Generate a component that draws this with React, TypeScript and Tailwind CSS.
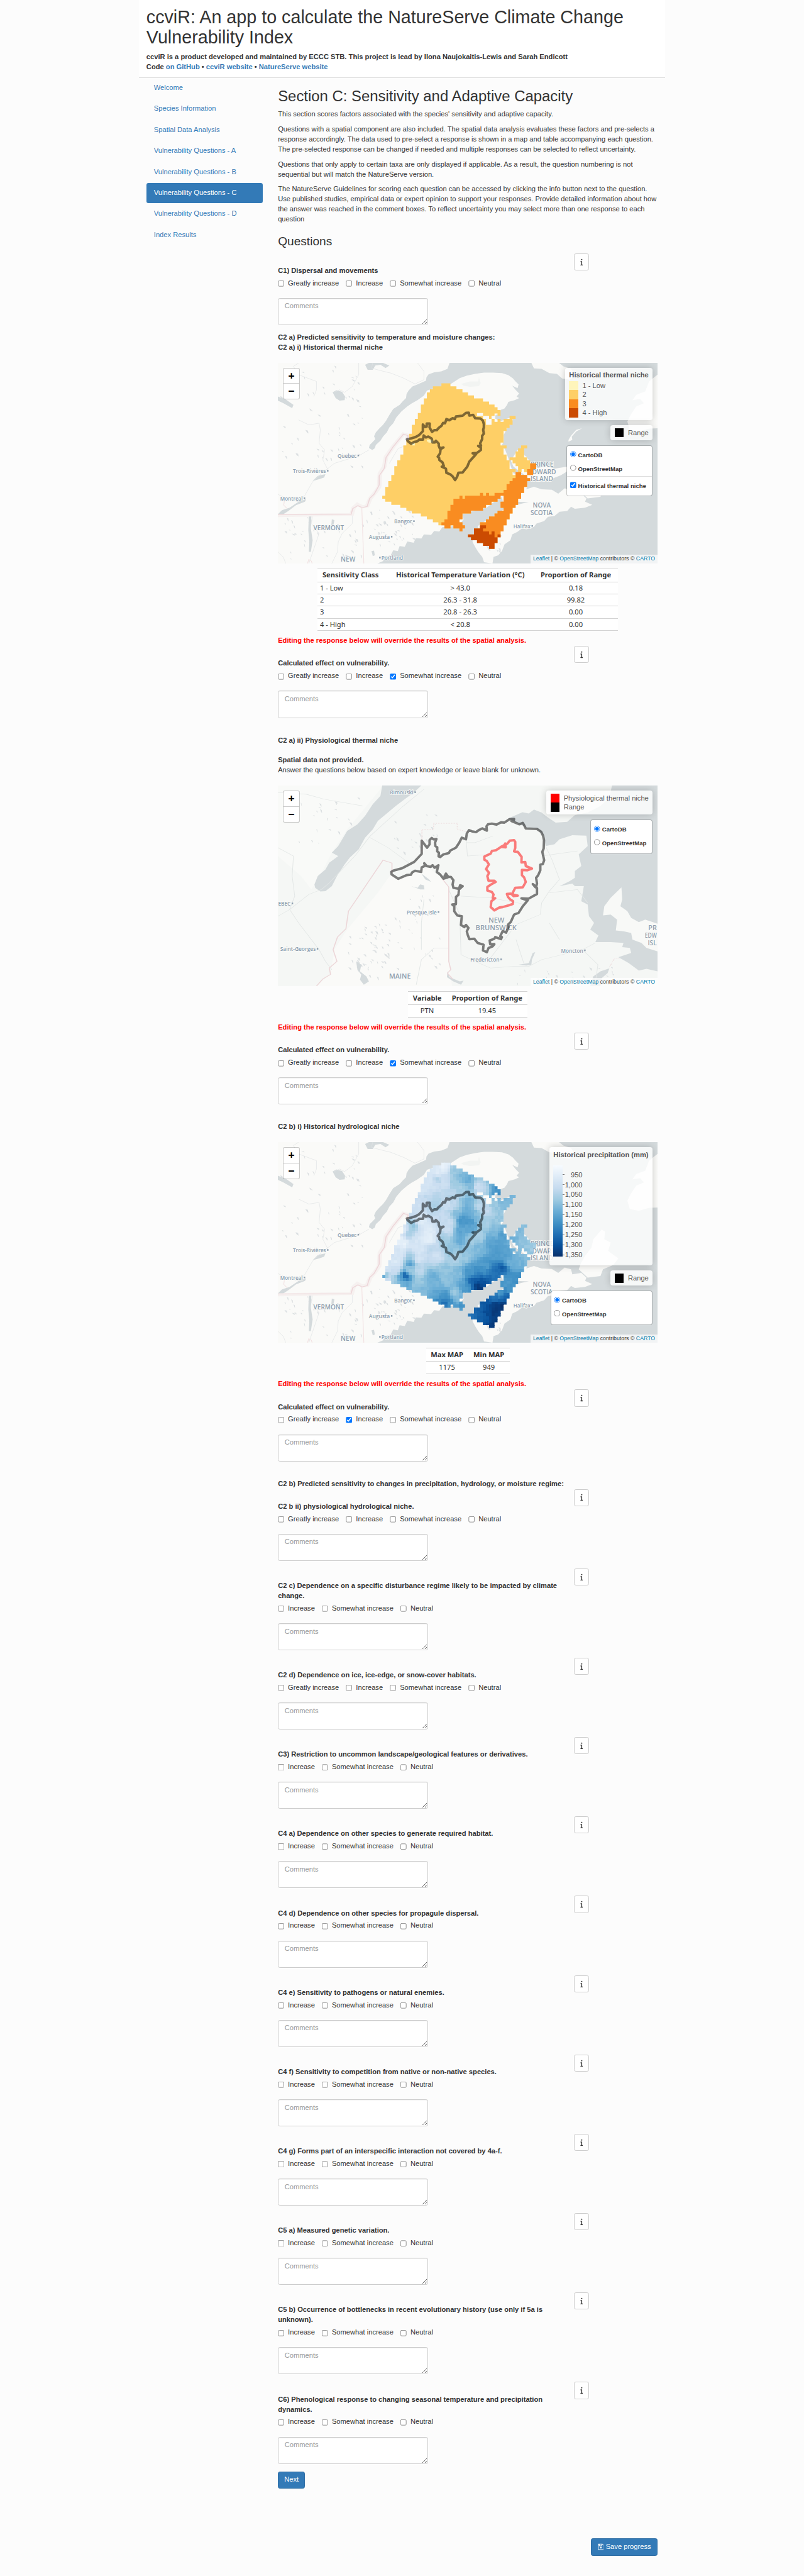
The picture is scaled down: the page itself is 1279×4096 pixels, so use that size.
import React from "react";
import { FaInfo, FaRegFloppyDisk } from "react-icons/fa6";

/* ---------- Map geometry ---------- */

const WEST_SHORE =
  "29,39 700,39 692,75 668,90 640,95 618,108 610,125 608,145 575,168 555,180 540,205 532,225 530,250 518,268 505,290 480,315 465,350 452,385 440,410 425,432 412,455 405,478 410,495 398,515 388,530 385,548 398,560 408,550 412,530 430,505 440,480 455,455 465,425 480,400 492,365 512,330 535,300 552,282 575,262 600,235 612,205 640,190 680,178 705,165 722,148 740,130 768,115 800,105 835,97 870,97 905,100 930,112 948,132 958,150 970,168 966,190 945,175 958,200 972,222 962,240 972,250 955,262 930,272 925,290 915,312 900,320 897,345 880,350 878,372 900,388 920,375 950,362 945,392 925,430 912,470 912,510 905,530 918,560 930,610 940,660 950,700 985,708 1000,735 1005,775 1000,795 1030,780 1060,795 1100,798 1125,822 1150,790 1175,800 1180,830 1215,822 1235,850 1230,870 1258,888 1230,905 1190,912 1175,900 1160,925 1130,930 1110,955 1085,960 1070,985 1040,1000 1030,1020 1000,1035 985,1028 965,1050 945,1065 938,1100 915,1125 905,1165 890,1190 872,1200 868,1239 835,1232 828,1200 812,1170 800,1140 790,1110 792,1080 815,1050 810,1015 850,975 885,945 910,918 960,890 985,880 1010,872 960,870 945,885 910,880 905,840 870,875 845,905 795,925 750,940 755,975 740,1005 700,1020 672,1022 660,1048 640,1045 628,1068 600,1065 590,1090 568,1088 560,1115 535,1108 525,1140 505,1135 498,1165 480,1160 470,1190 448,1200 440,1225 418,1239 29,1239";

const FAR_SHORES = [
  "1020,39 1128,39 1145,60 1175,75 1190,110 1170,140 1140,132 1120,105 1090,100 1060,75 1030,72",
  "1513,110 1480,150 1465,210 1430,230 1415,262 1445,255 1460,280 1430,300 1410,345 1395,390 1405,440 1440,450 1480,432 1513,430",
  "1295,562 1308,575 1305,620 1330,640 1320,690 1360,735 1340,775 1300,800 1290,840 1240,850 1205,800 1215,760 1230,720 1255,670 1262,620",
  "940,625 965,560 1000,600 1020,640 1045,668 1080,655 1110,672 1160,660 1158,690 1135,712 1095,735 1060,748 1020,745 985,700 950,660",
  "1165,510 1180,500 1178,480 1195,450 1218,430 1195,440 1175,475 1165,500",
];

const ROADS = [
  "29,825 60,850 110,870 135,830 165,750 200,700 250,640 345,595 385,560",
  "345,39 345,110 320,180 290,215 270,200 250,215",
  "110,380 150,410 190,400 195,440 190,520 212,560 205,620 225,680",
  "400,39 395,70 430,85 470,100 520,130 565,165 600,140 600,90 575,39",
  "320,945 320,1000 280,1060 265,1110 262,1170 240,1239",
  "110,39 90,60 110,110 180,150 180,200 170,240",
  "29,1170 50,1200 60,1239",
  "165,950 160,1000 190,1060 170,1150 150,1239",
  "540,530 500,550 480,600 465,640",
];

const LAKES = [
  "243,215 258,203 280,212 292,240 290,262 270,265 255,250",
  "29,945 45,920 75,905 110,870 140,855 135,870 100,890 70,925 50,945",
  "165,745 185,715 215,705 210,725 190,735",
  "150,955 160,955 158,1030 165,1100 158,1170 150,1170 152,1110 148,1040",
  "395,1165 405,1162 408,1190 400,1195",
  "370,50 385,39 440,39 465,55 450,70 430,50 410,55 400,80 380,80",
  "240,975 250,980 245,1020 238,1010",
  "29,240 60,258 90,290 85,310 50,280 29,265",
];

const LAND =
  "M378,41H432V59H468V77H504V96H537V114H573V132H627V150H663V168H696V184H714V201H732V236H714V222H696V236H678V254H663V236H627V219H591V236H627V254H645V290H678V254H696V272H714V254H732V272H750V254H786V236H822V254H804V290H786V308H768V326H750V396H732V413H768V431H750V467H768V502H786V555H822V573H804V590H822V573H855V590H891V608H909V626H891V661H873V697H855V732H837V768H822V786H804V820H786V855H768V891H750V927H732V962H714V997H696V1032H663V1014H627V997H591V980H555V962H537V945H573V909H609V873H645V855H663V838H696V820H714V803H750V786H732V750H750V714H732V732H714V750H678V768H645V786H627V803H555V820H504V855H486V873H504V891H519V909H504V927H486V909H450V891H432V909H396V891H360V873H327V855H291V838H255V820H201V803H168V786H132V768H78V750H42V732H24V714H42V661H60V626H78V590H96V537H114V502H132V467H150V413H168V378H185V343H201V290H219V254H237V219H255V168H273V132H291V96H309V77H327V59H378Z";
const ISLAND =
  "M855,413H891V431H873V484H891V502H909V520H945V555H927V590H891V573H873V555H858V573H837V537H822V520H804V502H786V484H822V449H837V431H855Z";
const CLASS3 =
  "M822,573H855V590H891V608H909V626H891V661H873V697H855V732H837V768H822V786H804V820H786V855H768V891H750V927H732V962H609V873H645V855H663V838H696V820H714V803H750V786H732V750H750V714H732V732H714V750H678V768H645V786H627V803H555V820H504V855H486V873H504V891H519V909H504V927H486V909H450V891H432V909H396V891H378V873H396V855H414V803H432V768H450V732H486V714H504V732H519V714H609V697H627V714H645V697H663V714H696V697H750V679H768V644H786V626H804V608H822ZM909,520H945V555H927V590H891V555H909Z";
const CLASS4 =
  "M609,891H645V909H627V927H663V945H678V927H696V962H714V945H732V962H714V997H696V1032H663V1014H627V997H591V980H555V962H537V945H573V909H609Z";

const RANGE =
  "172,376 200,370 225,362 243,352 267,328 267,288 280,303 290,300 290,282 308,282 307,305 314,318 322,332 335,322 350,322 362,308 378,296 388,278 400,280 408,255 425,262 445,250 458,255 465,240 505,235 525,218 542,217 545,234 568,230 580,250 612,252 626,264 632,285 632,305 628,320 632,342 622,355 622,375 610,400 615,415 598,416 614,426 614,440 590,458 565,460 586,464 545,510 533,540 520,556 505,575 480,576 472,600 460,620 445,598 430,585 408,577 405,552 380,540 392,535 385,515 366,500 364,486 356,480 370,460 373,435 390,425 368,430 362,415 362,402 345,385 338,395 325,395 320,372 300,360 285,365 272,353 268,378 245,378 235,388 215,392 197,403 175,385";

const RANGE_ZOOMED =
  "33,355 45,347 100,332 170,295 215,247 215,168 247,210 262,190 262,165 275,152 285,160 303,158 295,180 297,200 308,208 308,232 318,240 316,262 326,266 345,250 378,242 385,228 420,210 440,180 455,150 480,160 485,125 498,105 515,112 540,117 560,103 578,95 605,108 603,82 612,70 635,66 662,72 690,58 710,60 740,40 768,38 765,55 752,50 800,70 820,62 828,75 838,95 905,98 930,115 942,140 947,165 945,215 937,235 948,285 940,308 925,312 925,345 912,375 900,390 905,425 900,445 880,428 895,446 905,450 905,487 855,515 812,513 850,525 820,560 795,600 768,610 748,655 732,670 735,685 720,718 700,708 685,740 695,745 690,757 655,745 650,755 622,765 625,788 650,787 640,800 615,810 605,835 582,825 585,790 550,780 530,755 500,757 490,730 485,710 495,690 480,672 470,685 450,672 455,620 428,615 410,590 410,560 398,550 420,548 420,505 435,492 438,460 460,440 445,435 438,456 405,450 400,430 405,405 390,385 375,385 360,365 352,380 370,388 345,395 325,370 305,355 315,315 292,330 280,315 268,325 245,320 230,303 236,318 215,328 212,355 175,348 158,358 150,372 125,374 75,396 35,370";

const THERMAL_NICHE =
  "728,185 742,168 768,165 775,175 775,212 768,232 790,235 813,265 812,298 835,296 838,320 875,335 848,345 815,343 815,375 828,388 838,415 820,447 775,450 762,475 760,490 790,497 765,500 750,485 725,487 732,505 745,520 762,530 760,547 735,555 700,565 680,568 650,585 628,565 632,530 655,512 640,510 645,490 635,475 608,466 608,445 630,430 658,415 650,408 615,408 608,380 618,360 600,338 617,310 605,290 590,282 590,263 628,245 635,230 660,225 690,205 710,195 715,185 718,208 690,205";

/* ---------- Precipitation surface ---------- */

const PRECIP: number[][] = [
  [400, 60, 940], [350, 110, 955], [320, 150, 975], [460, 80, 1080], [490, 130, 1110], [540, 150, 1140], [460, 170, 1080],
  [350, 140, 1060], [400, 170, 1000], [270, 200, 990], [330, 200, 1000], [440, 220, 1040], [590, 190, 995], [640, 190, 1020],
  [700, 190, 1200], [720, 215, 1190], [675, 180, 1120], [500, 200, 1065], [560, 190, 1110], [280, 260, 1025], [350, 250, 1045],
  [230, 300, 1000], [350, 290, 1055], [400, 290, 1010], [450, 300, 1020], [540, 280, 1120], [540, 330, 1140], [500, 390, 1190],
  [550, 390, 1180], [470, 340, 1100], [490, 450, 1150], [550, 440, 1160], [580, 360, 1110], [605, 300, 1040], [650, 330, 1020],
  [700, 300, 1080], [760, 280, 1110], [800, 250, 1110], [720, 380, 1080], [640, 400, 1060], [700, 460, 1110], [600, 480, 1060],
  [560, 500, 1070], [490, 500, 1140], [430, 400, 1010], [420, 450, 1010], [390, 360, 1020], [250, 400, 965], [300, 450, 960],
  [300, 500, 945], [210, 420, 1090], [190, 470, 1060], [150, 440, 970], [150, 520, 940], [220, 500, 980], [240, 560, 980],
  [320, 560, 1030], [350, 600, 995], [130, 600, 975], [110, 640, 970], [192, 645, 1170], [190, 615, 1080], [190, 685, 1070],
  [230, 620, 980], [60, 680, 985], [60, 740, 995], [33, 722, 1150], [110, 690, 1000], [160, 720, 1290], [130, 735, 1150],
  [145, 760, 1130], [100, 750, 1070], [240, 690, 1030], [240, 760, 1080], [320, 730, 1130], [320, 780, 1120], [400, 690, 1090],
  [420, 750, 1090], [440, 560, 1090], [460, 620, 1055], [400, 500, 1070], [520, 600, 1080], [600, 560, 1110], [680, 520, 1160],
  [740, 480, 1165], [700, 580, 1170], [760, 600, 1160], [640, 660, 1170], [700, 690, 1245], [742, 672, 1290], [640, 700, 1200],
  [550, 700, 1180], [560, 750, 1285], [600, 785, 1345], [630, 750, 1300], [660, 725, 1260], [530, 790, 1180], [480, 720, 1100],
  [500, 760, 1150], [460, 820, 1080], [400, 840, 1180], [400, 880, 1260], [350, 870, 1200], [430, 880, 1190], [475, 860, 1110],
  [500, 900, 1180], [340, 830, 1150], [280, 810, 1110], [800, 720, 1190], [840, 720, 1190], [820, 660, 1130], [860, 630, 1120],
  [780, 640, 1130], [880, 600, 1100], [770, 760, 1170], [790, 800, 1190], [730, 825, 1180], [765, 845, 1280], [700, 850, 1250],
  [640, 880, 1285], [745, 900, 1360], [700, 900, 1345], [660, 930, 1320], [590, 920, 1280], [560, 950, 1240], [610, 960, 1275],
  [700, 950, 1345], [680, 1010, 1340], [640, 985, 1290], [860, 460, 1105], [850, 510, 1090], [900, 540, 1085], [930, 540, 1065],
  [810, 495, 1130],
];

const BLUES = [
  [247, 251, 255], [222, 235, 247], [198, 219, 239], [158, 202, 225], [107, 174, 214],
  [66, 146, 198], [33, 113, 181], [8, 81, 156], [8, 48, 107],
];

function blue(v: number) {
  const t = Math.max(0, Math.min(7.999, ((v - 904) / 457) * 8));
  const i = Math.floor(t);
  const c = BLUES[i].map((a, k) => Math.round(a + (BLUES[i + 1][k] - a) * (t - i)));
  return `rgb(${c.join(",")})`;
}

const CELL = 17.71;
const CELLS: { x: number; y: number; fill: string }[] = [];
for (let r = 0; r < 56; r++) {
  for (let c = 0; c < 52; c++) {
    const x = 24 + c * CELL;
    const y = 41 + r * CELL;
    let sum = 0;
    let weight = 0;
    for (const [px, py, v] of PRECIP) {
      const d = (px - x - 9) ** 2 + (py - y - 9) ** 2 + 350;
      const w = 1 / (d * d);
      sum += w * v;
      weight += w;
    }
    const n = Math.sin(r * 12.9898 + c * 78.233) * 43758.5453;
    CELLS.push({ x, y, fill: blue(sum / weight + (n - Math.floor(n) - 0.5) * 20) });
  }
}

/* ---------- Map pieces ---------- */

type Place = { t: string; x: number; y: number; w: number; big?: boolean; dot?: "l" | "r" };

function Places({ items }: { items: Place[] }) {
  return (
    <g fill="#8d9eae" fontFamily="'Open Sans', sans-serif" fontWeight={600}>
      {items.map((p) => (
        <g key={p.t + p.x}>
          <text
            x={p.x}
            y={p.y}
            fontSize={p.big ? 12.5 : 11}
            textLength={p.w}
            lengthAdjust="spacingAndGlyphs"
            stroke="#fafaf8"
            strokeWidth={2}
            paintOrder="stroke"
          >
            {p.t}
          </text>
          {p.dot && <rect x={p.dot === "r" ? p.x + p.w + 2 : p.x - 4.5} y={p.y - 6} width={3} height={3.2} />}
        </g>
      ))}
    </g>
  );
}

const EAST_PLACES: Place[] = [
  { t: "Quebec", x: 119, y: 189, w: 38, dot: "r" },
  { t: "Trois-Rivières", x: 30, y: 219.5, w: 66, dot: "r" },
  { t: "Montreal", x: 4.6, y: 274.3, w: 45, dot: "r" },
  { t: "VERMONT", x: 71, y: 334, w: 61, big: true },
  { t: "NEW", x: 125.5, y: 396.5, w: 29, big: true },
  { t: "Bangor", x: 232, y: 320, w: 36, dot: "r" },
  { t: "Augusta", x: 181.6, y: 351, w: 42, dot: "r" },
  { t: "Portland", x: 206.6, y: 392.7, w: 43, dot: "l" },
  { t: "Halifax", x: 470, y: 329.5, w: 34, dot: "r" },
  { t: "NOVA", x: 508.6, y: 289, w: 36, big: true },
  { t: "SCOTIA", x: 504, y: 303.5, w: 44, big: true },
  { t: "PRINCE", x: 504, y: 207, w: 46, big: true },
  { t: "EDWARD", x: 500, y: 221.5, w: 55, big: true },
  { t: "ISLAND", x: 504, y: 236.3, w: 45, big: true },
];

const NB_PLACES: Place[] = [
  { t: "Rimouski", x: 223.5, y: 17.7, w: 47, dot: "r" },
  { t: "EBEC", x: 0.5, y: 239.5, w: 25, dot: "r" },
  { t: "Presque Isle", x: 257, y: 256.7, w: 60, dot: "r" },
  { t: "NEW", x: 420, y: 273, w: 32, big: true },
  { t: "BRUNSWICK", x: 394.5, y: 289, w: 82, big: true },
  { t: "Saint-Georges", x: 4.6, y: 330, w: 71, dot: "r" },
  { t: "Moncton", x: 565, y: 333, w: 44, dot: "r" },
  { t: "Fredericton", x: 384, y: 351, w: 58, dot: "r" },
  { t: "MAINE", x: 222, y: 385, w: 43, big: true },
  { t: "PR", x: 739, y: 288, w: 17, big: true },
  { t: "EDW", x: 732, y: 303.5, w: 24, big: true },
  { t: "ISL", x: 738, y: 319, w: 18, big: true },
];

function Specks({ seed, n, x0, y0, w, h }: { seed: number; n: number; x0: number; y0: number; w: number; h: number }) {
  const rnd = (k: number) => {
    const v = Math.sin(seed + k * 127.1) * 43758.5453;
    return v - Math.floor(v);
  };
  const dots = Array.from({ length: n }, (_, i) => {
    const x = x0 + rnd(i * 4) * w;
    const y = y0 + rnd(i * 4 + 1) * h;
    const a = 2 + rnd(i * 4 + 2) * 5;
    const b = 4 + rnd(i * 4 + 3) * 14;
    return `M${x},${y}l${a},${b}l${a * 0.8},${b * 0.3}l${-a * 0.3},${-b}z`;
  });
  return <path d={dots.join("")} fill="#d4dadc" opacity={0.8} />;
}

function EastBase() {
  return (
    <>
      <rect width="758" height="400" fill="#d4dadc" />
      <g transform="scale(.5104 .3333) translate(-29 -39)">
        <polygon points={WEST_SHORE} fill="#fafaf8" />
        {FAR_SHORES.map((p) => (
          <polygon key={p} points={p} fill="#fafaf8" />
        ))}
        <polygon points="745,165 780,150 812,150 815,125 822,160 815,178 780,182 755,175" fill="#f2f4f2" />
        {LAKES.map((p) => (
          <polygon key={p} points={p} fill="#d4dadc" />
        ))}
        <Specks seed={3} n={60} x0={35} y0={45} w={330} h={620} />
        <Specks seed={8} n={45} x0={370} y0={900} w={190} h={230} />
        <Specks seed={5} n={40} x0={40} y0={960} w={330} h={250} />
        <Specks seed={11} n={16} x0={840} y0={1060} w={60} h={100} />
        <g fill="none" stroke="#dfe3e4" strokeWidth={2}>
          {ROADS.map((p) => (
            <polyline key={p} points={p} />
          ))}
        </g>
        <g fill="none">
          <polyline points="29,953 318,945 325,905 340,885 360,900 378,895 390,850 412,810 425,780 428,700 445,660 452,600 480,540 520,465 538,472 535,500" stroke="#f6f1f0" strokeWidth={18} />
          <polyline points="29,948 315,946 322,910 342,893 358,905 378,898 388,850 405,825 418,790 425,770 425,715 445,670 452,605 480,540 520,465 538,475 535,500" stroke="#edd5d8" strokeWidth={4} />
          <path d="M357,900L365,1239M145,1239L150,1215L160,1225L163,1239M55,860L52,890L65,910" stroke="#f2e2e3" strokeWidth={3} />
        </g>
      </g>
      <Places items={EAST_PLACES} />
    </>
  );
}

function RangeLine() {
  return (
    <polygon points={RANGE} fill="none" stroke="#000" strokeOpacity={0.5} strokeWidth={15} strokeLinejoin="round" />
  );
}

function ThermalMap() {
  return (
    <svg className="block h-full w-full" viewBox="0 0 757.5 400">
      <EastBase />
      <g transform="translate(200.3 27) scale(.33333)">
        <path d={LAND + ISLAND} fill="#fecf66" />
        <path d={CLASS3} fill="#f98c21" />
        <path d={CLASS4} fill="#cb4b02" />
        <path d="M201,398H219V413H201ZM291,378H327V396H300V390H291Z" fill="#fff5bb" />
        <RangeLine />
      </g>
    </svg>
  );
}

function PrecipMap() {
  return (
    <svg className="block h-full w-full" viewBox="0 0 757.5 400">
      <EastBase />
      <clipPath id="land">
        <path d={LAND + ISLAND} />
      </clipPath>
      <g transform="translate(200.3 27) scale(.33333)">
        <g clipPath="url(#land)" shapeRendering="crispEdges">
          {CELLS.map((c) => (
            <rect key={`${c.x}-${c.y}`} x={c.x} y={c.y} width={20} height={20} fill={c.fill} />
          ))}
        </g>
        <RangeLine />
      </g>
    </svg>
  );
}

function PhysiologicalMap() {
  return (
    <svg className="block h-full w-full" viewBox="0 0 757.5 400">
      <rect width="758" height="400" fill="#f5f7f5" />
      <g transform="scale(.5104 .3333) translate(-29 -78)">
        <polygon points="475,600 500,640 560,600 620,570 673,640 697,680 697,1130 710,1278 180,1278 235,1205 250,1060 300,940 420,720" fill="#fafaf8" />
        <polygon points="29,78 29,500 120,620 160,700 200,600 240,480 300,340 430,100 435,78" fill="#f9faf8" />
        <polygon points="437,78 590,78 560,120 525,160 490,200 420,290 400,340 370,390 345,460 310,510 290,550 260,620 240,680 215,710 195,712 175,690 172,670 185,620 215,580 230,540 265,500 240,480 265,440 300,350 340,310 370,260 400,190 430,140" fill="#d4dadc" />
        <polygon points="930,275 985,238 1010,245 1030,222 1060,240 1085,270 1115,300 1160,295 1190,255 1240,240 1290,200 1325,150 1335,78 1513,78 1513,1190 1470,1175 1440,1185 1400,1140 1360,1105 1410,1080 1405,1050 1375,1045 1380,1020 1330,1015 1270,1015 1282,975 1250,940 1265,900 1245,860 1240,790 1215,770 1225,680 1190,680 1180,665 1130,680 1170,650 1190,630 1190,590 1215,560 1205,490 1240,440 1235,378 1180,375 1130,400 1110,430 1075,440 1070,380 1040,335 1000,330" fill="#d4dadc" />
        <polygon points="1372,688 1375,760 1368,800 1395,830 1410,870 1440,895 1465,880 1513,905 1513,1070 1470,1050 1450,1020 1415,1000 1410,960 1380,950 1350,945 1355,880 1330,850 1300,855 1305,800 1330,750" fill="#f8f9f7" />
        <polygon points="1250,1278 1262,1220 1290,1190 1325,1172 1318,1200 1295,1230 1290,1278" fill="#d4dadc" />
        <polygon points="335,1130 355,1150 350,1190 375,1220 385,1250 365,1270 350,1240 355,1210 340,1180" fill="#d4dadc" />
        <polygon points="1010,1140 1025,1080 1035,1075 1022,1120 1020,1150 1000,1155 970,1150" fill="#d4dadc" />
        <polygon points="590,605 605,640 628,655 620,640" fill="#d4dadc" />
        <polygon points="550,680 575,690 585,670 600,675 602,700 585,700" fill="#d4dadc" />
        <polygon points="692,1190 700,1225 740,1250 755,1245 745,1270 715,1250 690,1225" fill="#d4dadc" />
        <Specks seed={2} n={55} x0={300} y0={900} w={170} h={340} />
        <Specks seed={14} n={30} x0={480} y0={720} w={180} h={460} />
        <Specks seed={6} n={26} x0={40} y0={90} w={330} h={330} />
        <Specks seed={9} n={22} x0={480} y0={240} w={180} h={250} />
        <Specks seed={19} n={25} x0={940} y0={1160} w={400} h={110} />
        <g fill="none" stroke="#e3e7e6" strokeWidth={2.5}>
          <path d="M29,860L75,820L150,730L200,700L230,660L330,500L390,380L520,200L600,100" />
          <path d="M75,820L110,900L140,960L190,1060L215,1130L240,1180M29,120L140,130L210,160L360,200M29,450L90,500L85,620L95,740L75,820" />
          <path d="M390,390L460,450L540,540M765,400L770,500L860,490M870,380L800,420L765,420M1060,500L1200,470M1075,440L1100,520L1130,640L1090,710L1060,780L1055,850L960,910L850,1130" />
          <path d="M697,700L740,850L745,1090L800,1130L860,1170L950,1160L1010,1160L1060,1120L1220,1060L1270,1020M640,1050H697M640,1050L590,1120L570,1270M600,760L590,900L590,1060M960,1000L990,1140M1130,1000L1090,900" />
          <path d="M1090,720L1200,700L1240,780M745,740L860,750L1000,790M1220,1060L1280,1150L1270,1260" />
        </g>
        <g fill="none" stroke="#ecd6d8" strokeWidth={4}>
          <path d="M180,1278L205,1235L235,1208L230,1170L260,1130L245,1060L262,985L295,935L305,830L440,525L475,542L475,600" />
          <path d="M673,640L697,685V1130L705,1180L692,1200L712,1235" />
          <path d="M592,480V340H638V304H730V340L775,358" strokeDasharray="5 5" strokeWidth={3} />
          <path d="M1325,1165L1345,1112H1365" strokeDasharray="4 4" strokeWidth={3} />
        </g>
      </g>
      <Places items={NB_PLACES} />
      <g transform="translate(215.3 54) scale(.33333)" fill="none" strokeWidth={14.5} strokeLinejoin="round" strokeLinecap="round">
        <polygon points={RANGE_ZOOMED} stroke="#000" strokeOpacity={0.5} />
        <polygon points={THERMAL_NICHE} stroke="#f00" strokeOpacity={0.5} />
      </g>
    </svg>
  );
}

/* ---------- Map controls ---------- */

function Card({ children, className = "" }: { children: React.ReactNode; className?: string }) {
  return (
    <div className={`rounded-[5px] bg-white/80 px-2 py-1.5 text-[14px] leading-[18px] text-[#555] shadow-[0_0_15px_rgba(0,0,0,0.2)] ${className}`}>
      {children}
    </div>
  );
}

function Swatch({ color, label }: { color: string; label: string }) {
  return (
    <div className="flex h-[18px] gap-[8.5px]">
      <i className="h-[18px] w-[18px]" style={{ background: color }} />
      <span>{label}</span>
    </div>
  );
}

function Layers({ name, overlay, className }: { name: string; overlay?: string; className: string }) {
  return (
    <div className={`rounded-[5px] border-2 border-black/20 bg-white bg-clip-padding text-[12px] font-bold leading-[27px] text-[#333] ${className}`}>
      <div className={overlay ? "px-[6px] pt-[5px]" : "px-[6px] pt-[5px] pb-[7px]"}>
        <label className="flex h-[27px] items-center gap-[3px]">
          <input type="radio" name={name} defaultChecked className="mt-[-3px] h-[13px] w-[13px]" />
          CartoDB
        </label>
        <label className="flex h-[27px] items-center gap-[3px]">
          <input type="radio" name={name} className="mt-[-3px] h-[13px] w-[13px]" />
          OpenStreetMap
        </label>
      </div>
      {overlay && (
        <div className="mt-px border-t border-[#ddd] px-[6px] pt-[5px] pb-[6px]">
          <label className="flex h-[27px] items-center gap-[3px]">
            <input type="checkbox" defaultChecked className="mt-[-3px] h-[13px] w-[13px]" />
            {overlay}
          </label>
        </div>
      )}
    </div>
  );
}

function MapFrame({ map, children }: { map: React.ReactNode; children: React.ReactNode }) {
  return (
    <div className="relative h-[400px] w-full overflow-hidden">
      {map}
      <div className="absolute left-[10px] top-[10px] flex w-[34px] flex-col rounded-[4px] border-2 border-black/20 bg-white bg-clip-padding text-center font-['DejaVu_Sans_Mono',monospace] text-[20px] font-bold leading-[30px] text-black">
        <span className="h-[31px] border-b border-[#ccc]">+</span>
        <span className="h-[30px]">−</span>
      </div>
      <div className="absolute right-[10px] top-[10px] flex flex-col items-end gap-[10px]">{children}</div>
      <div className="absolute bottom-0 right-0 h-[17px] whitespace-nowrap bg-white/70 px-[5px] text-[11px] leading-[17px] text-[#333]">
        <span className="text-[#0078a8]">Leaflet</span> | © <span className="text-[#0078a8]">OpenStreetMap</span> contributors ©{" "}
        <span className="text-[#0078a8]">CARTO</span>
      </div>
    </div>
  );
}

/* ---------- Tables ---------- */

function DataTable({ head, rows, widths, lead }: { head: string[]; rows: string[][]; widths: number[]; lead?: boolean }) {
  return (
    <div className={`mt-[10px] flex items-start justify-center font-['Noto_Sans',sans-serif] text-[14px] leading-[23px] ${lead ? "h-[125.3px]" : "h-[53px]"}`}>
      <table className="table-fixed border-collapse bg-white" style={{ width: widths.reduce((a, b) => a + b, 0) }}>
        <colgroup>
          {widths.map((w, i) => (
            <col key={i} style={{ width: w }} />
          ))}
        </colgroup>
        <thead>
          <tr className="h-[26.3px] border-y-2 border-[#d3d3d3]">
            {head.map((h, i) => (
              <th key={h} className={`whitespace-nowrap p-0 font-bold ${lead && i === 0 ? "pl-[10px] text-left" : "text-center"}`}>
                {h}
              </th>
            ))}
          </tr>
        </thead>
        <tbody className="border-b-2 border-[#d3d3d3]">
          {rows.map((r) => (
            <tr key={r[0]} className="h-[24.3px] border-t border-[#d3d3d3] first:border-t-2">
              {r.map((c, i) => (
                <td key={i} className={`p-0 ${lead && i === 0 ? "pl-[5px] text-left" : "text-center"}`}>
                  {c}
                </td>
              ))}
            </tr>
          ))}
        </tbody>
      </table>
    </div>
  );
}

/* ---------- Questions ---------- */

const FOUR = ["Greatly increase", "Increase", "Somewhat increase", "Neutral"];
const THREE = FOUR.slice(1);

function Question({ title, options = THREE, checked }: { title: string; options?: string[]; checked?: string }) {
  return (
    <div className="flex pb-[15.1px]">
      <div className="w-[590px] pr-[30px] pt-[25.2px]">
        <div className="font-bold">{title}</div>
        <div className="mt-[5px] flex h-[20px] gap-[13.9px]">
          {options.map((o) => (
            <label key={o} className="flex gap-[7px]">
              <input type="checkbox" defaultChecked={o === checked} className="mt-[4px] h-[13px] w-[13px]" />
              {o}
            </label>
          ))}
        </div>
        <textarea
          placeholder="Comments"
          className="mt-[19px] block h-[54px] w-[300px] resize rounded-[4px] border border-[#ccc] bg-white px-3 py-1.5 text-[14px] leading-5 shadow-[inset_0_1px_1px_rgba(0,0,0,0.075)] placeholder:text-[#999]"
        />
      </div>
      <button className="flex h-[34px] w-[31px] items-center justify-center rounded-[4px] border border-[#ccc] bg-white text-[14px] text-[#333]">
        <FaInfo className="h-[14px] w-[6px]" />
      </button>
    </div>
  );
}

function Override() {
  return <div className="mt-[10px] font-bold text-[#f00]">Editing the response below will override the results of the spatial analysis.</div>;
}

const NAV = [
  "Welcome",
  "Species Information",
  "Spatial Data Analysis",
  "Vulnerability Questions - A",
  "Vulnerability Questions - B",
  "Vulnerability Questions - C",
  "Vulnerability Questions - D",
  "Index Results",
];

const TICKS = ["950", "1,000", "1,050", "1,100", "1,150", "1,200", "1,250", "1,300", "1,350"];

export default function App() {
  return (
    <div className="min-h-screen overflow-hidden bg-[#fcfcfc]">
      <div className="flex h-[5136px] w-[1604px] justify-center font-['Liberation_Sans',sans-serif] text-[14px] leading-5 text-[#333] [zoom:0.7974]">
        <div className="w-[1050px]">
          <header className="h-[155px] border-b border-[#ddd] bg-white px-[15px] pt-[15px]">
            <h1 className="text-[36px] leading-[39.6px]">ccviR: An app to calculate the NatureServe Climate Change Vulnerability Index</h1>
            <div className="mt-[10px] font-bold">
              ccviR is a product developed and maintained by ECCC STB. This project is lead by Ilona Naujokaitis-Lewis and Sarah Endicott
              <br />
              Code <a className="text-[#337ab7]">on GitHub</a> • <a className="text-[#337ab7]">ccviR website</a> •{" "}
              <a className="text-[#337ab7]">NatureServe website</a>
            </div>
          </header>

          <div className="flex">
            <nav className="flex w-[262.5px] flex-col gap-[2px] px-[15px]">
              {NAV.map((n) => (
                <a
                  key={n}
                  className={
                    n === "Vulnerability Questions - C"
                      ? "rounded-[4px] bg-[#337ab7] px-[15px] py-[10px] text-white"
                      : "px-[15px] py-[10px] text-[#337ab7]"
                  }
                >
                  {n}
                </a>
              ))}
            </nav>

            <main className="w-[787.5px] px-[15px]">
              <h2 className="mt-[20px] text-[30px] leading-[33px]">Section C: Sensitivity and Adaptive Capacity</h2>
              <p className="mt-[10px]">This section scores factors associated with the species' sensitivity and adaptive capacity.</p>
              <p className="mt-[10px]">
                Questions with a spatial component are also included. The spatial data analysis evaluates these factors and pre-selects a
                response accordingly. The data used to pre-select a response is shown in a map and table accompanying each question. The
                pre-selected response can be changed if needed and multiple responses can be selected to reflect uncertainty.
              </p>
              <p className="mt-[10px]">
                Questions that only apply to certain taxa are only displayed if applicable. As a result, the question numbering is not
                sequential but will match the NatureServe version.
              </p>
              <p className="mt-[10px]">
                The NatureServe Guidelines for scoring each question can be accessed by clicking the info button next to the question. Use
                published studies, empirical data or expert opinion to support your responses. Provide detailed information about how the
                answer was reached in the comment boxes. To reflect uncertainty you may select more than one response to each question
              </p>
              <h3 className="mt-[20px] mb-[10.5px] text-[24px] leading-[26.4px]">Questions</h3>

              <Question title="C1) Dispersal and movements" options={FOUR} />
              <div className="mb-[20px] font-bold">
                C2 a) Predicted sensitivity to temperature and moisture changes:
                <br />
                C2 a) i) Historical thermal niche
              </div>
              <MapFrame map={<ThermalMap />}>
                <Card>
                  <div className="mb-[3px] font-bold">Historical thermal niche</div>
                  <Swatch color="#fff5bb" label="1 - Low" />
                  <Swatch color="#fecf66" label="2" />
                  <Swatch color="#f98c21" label="3" />
                  <Swatch color="#cb4b02" label="4 - High" />
                </Card>
                <Card>
                  <Swatch color="#000" label="Range" />
                </Card>
                <Layers name="base-a" overlay="Historical thermal niche" className="w-[172px]" />
              </MapFrame>
              <DataTable
                lead
                head={["Sensitivity Class", "Historical Temperature Variation (°C)", "Proportion of Range"]}
                widths={[139, 292, 169]}
                rows={[
                  ["1 - Low", "> 43.0", "0.18"],
                  ["2", "26.3 - 31.8", "99.82"],
                  ["3", "20.8 - 26.3", "0.00"],
                  ["4 - High", "< 20.8", "0.00"],
                ]}
              />
              <Override />
              <Question title="Calculated effect on vulnerability." options={FOUR} checked="Somewhat increase" />

              <div className="mt-[20px] font-bold">C2 a) ii) Physiological thermal niche</div>
              <div className="mt-[20px] font-bold">Spatial data not provided.</div>
              <div className="mb-[20px]">Answer the questions below based on expert knowledge or leave blank for unknown.</div>
              <MapFrame map={<PhysiologicalMap />}>
                <Card>
                  <Swatch color="#f00" label="Physiological thermal niche" />
                  <Swatch color="#000" label="Range" />
                </Card>
                <Layers name="base-b" className="w-[124px]" />
              </MapFrame>
              <DataTable head={["Variable", "Proportion of Range"]} widths={[77, 162]} rows={[["PTN", "19.45"]]} />
              <Override />
              <Question title="Calculated effect on vulnerability." options={FOUR} checked="Somewhat increase" />

              <div className="mt-[20px] mb-[20px] font-bold">C2 b) i) Historical hydrological niche</div>
              <MapFrame map={<PrecipMap />}>
                <Card className="h-[236px] w-[206px]">
                  <div className="font-bold">Historical precipitation (mm)</div>
                  <div className="mt-[11.5px] flex">
                    <div className="h-[182.5px] w-[18px] bg-[linear-gradient(#f7fbff,#deebf7,#c6dbef,#9ecae1,#6baed6,#4292c6,#2171b5,#08519c,#08306b)]" />
                    <div className="flex w-[40px] flex-col pt-[9px]">
                      {TICKS.map((t) => (
                        <div key={t} className="flex h-[20px] items-center justify-between">
                          <i className="h-px w-[4px] bg-[#777]" />
                          <span>{t}</span>
                        </div>
                      ))}
                    </div>
                  </div>
                </Card>
                <Card>
                  <Swatch color="#000" label="Range" />
                </Card>
                <Layers name="base-c" className="w-[204px]" />
              </MapFrame>
              <DataTable head={["Max MAP", "Min MAP"]} widths={[84, 83]} rows={[["1175", "949"]]} />
              <Override />
              <Question title="Calculated effect on vulnerability." options={FOUR} checked="Increase" />

              <div className="mt-[20px] font-bold">C2 b) Predicted sensitivity to changes in precipitation, hydrology, or moisture regime:</div>
              <Question title="C2 b ii) physiological hydrological niche." options={FOUR} />
              <Question title="C2 c) Dependence on a specific disturbance regime likely to be impacted by climate change." />
              <Question title="C2 d) Dependence on ice, ice-edge, or snow-cover habitats." options={FOUR} />
              <Question title="C3) Restriction to uncommon landscape/geological features or derivatives." />
              <Question title="C4 a) Dependence on other species to generate required habitat." />
              <Question title="C4 d) Dependence on other species for propagule dispersal." />
              <Question title="C4 e) Sensitivity to pathogens or natural enemies." />
              <Question title="C4 f) Sensitivity to competition from native or non-native species." />
              <Question title="C4 g) Forms part of an interspecific interaction not covered by 4a-f." />
              <Question title="C5 a) Measured genetic variation." />
              <Question title="C5 b) Occurrence of bottlenecks in recent evolutionary history (use only if 5a is unknown)." />
              <Question title="C6) Phenological response to changing seasonal temperature and precipitation dynamics." />

              <button className="block h-[34px] w-[54px] rounded-[4px] border border-[#2e6da4] bg-[#337ab7] text-white">Next</button>
              <div className="mt-[100px] flex justify-end">
                <button className="flex h-[34px] items-center gap-[4px] rounded-[4px] border border-[#2e6da4] bg-[#337ab7] px-3 text-white">
                  <FaRegFloppyDisk className="h-[14px] w-[12.25px]" />
                  Save progress
                </button>
              </div>
            </main>
          </div>
        </div>
      </div>
    </div>
  );
}
